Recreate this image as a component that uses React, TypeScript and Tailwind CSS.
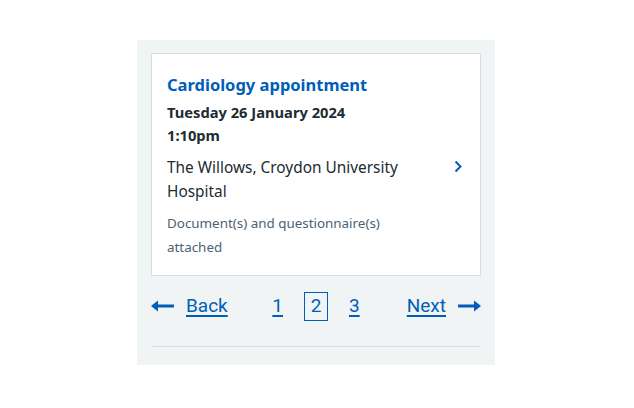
import React from "react";

const pages = [1, 2, 3];

function Arrow({ dir }: { dir: "left" | "right" }) {
  return (
    <svg width="23" height="12" viewBox="0 0 23 12" className="shrink-0" aria-hidden>
      {dir === "left" ? (
        <>
          <path d="M3 6h20" stroke="#005eb8" strokeWidth="3" />
          <path d="M0 6l7-5.5v11z" fill="#005eb8" />
        </>
      ) : (
        <>
          <path d="M0 6h20" stroke="#005eb8" strokeWidth="3" />
          <path d="M23 6l-7-5.5v11z" fill="#005eb8" />
        </>
      )}
    </svg>
  );
}

export default function App() {
  return (
    <div className="min-h-screen bg-white pt-10 pl-[137px]">
      <div className="w-[358px] h-[325px] bg-[#f0f4f5] px-[14px] pt-[13px]">
        <div className="bg-white border border-[#d8dde0] h-[223px] pl-[15px] pr-[17px] pt-[19px] flex font-['Noto_Sans',sans-serif]">
          <div className="flex-1">
            <h2 className="text-[#005eb8] font-bold text-[16.5px] leading-[24px]">Cardiology appointment</h2>
            <p className="text-[#212b32] font-bold text-[14.7px] leading-[23px] mt-[4px]">Tuesday 26 January 2024</p>
            <p className="text-[#212b32] font-bold text-[14.7px] leading-[23px]">1:10pm</p>
            <p className="text-[#212b32] text-[15.4px] leading-[24px] mt-[9px] w-[250px]">
              The Willows, Croydon University Hospital
            </p>
            <p className="text-[#4c6272] text-[13.4px] leading-[24px] mt-[7px] w-[230px]">
              Document(s) and questionnaire(s) attached
            </p>
          </div>
          <svg width="9" height="13" viewBox="0 0 9 13" className="mt-[87px] shrink-0" aria-hidden>
            <path d="M1.5 1.5l5 5-5 5" fill="none" stroke="#005eb8" strokeWidth="2" />
          </svg>
        </div>
        <nav className="grid grid-cols-[1fr_auto_1fr] items-center h-[30px] mt-[15px] font-['Roboto',sans-serif] text-[19px] text-[#005eb8]">
          <a className="flex items-center gap-[12px] justify-self-start">
            <Arrow dir="left" />
            <span className="underline underline-offset-[3px] decoration-[1.5px]">Back</span>
          </a>
          <div className="flex items-center gap-[21px]">
            {pages.map((p) =>
              p === 2 ? (
                <span key={p} className="w-[24px] h-[29px] border-[1.5px] border-[#005eb8] flex items-center justify-center">
                  {p}
                </span>
              ) : (
                <span key={p} className="underline underline-offset-[3px] decoration-[1.5px]">
                  {p}
                </span>
              )
            )}
          </div>
          <a className="flex items-center gap-[12px] justify-self-end">
            <span className="underline underline-offset-[3px] decoration-[1.5px]">Next</span>
            <Arrow dir="right" />
          </a>
        </nav>
        <div className="border-t border-[#d8dde0] mt-[25px]" />
      </div>
    </div>
  );
}
